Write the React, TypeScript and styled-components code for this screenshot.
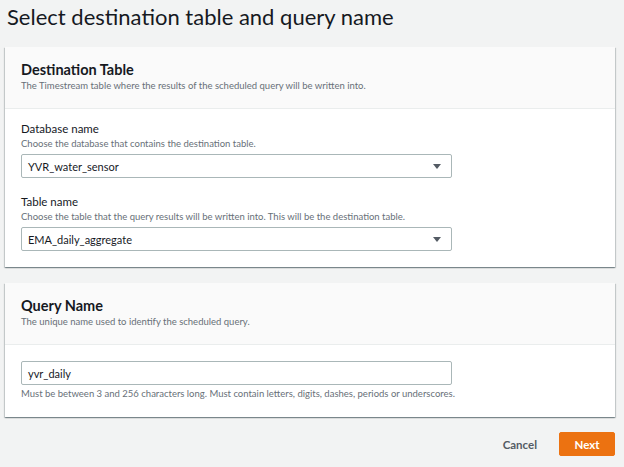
import React from 'react';
import styled, { createGlobalStyle } from 'styled-components';

const GlobalStyle = createGlobalStyle`
  html, body {
    margin: 0;
    padding: 0;
    background: #f2f3f3;
  }
  body {
    font-family: Lato, 'Open Sans', sans-serif;
    color: #16191f;
  }
  * { box-sizing: border-box; }
`;

const Page = styled.div`
  width: 624px;
  height: 467px;
  padding: 0 9px 0 5px;
  display: flex;
  flex-direction: column;
`;

const Title = styled.h1`
  margin: 0;
  padding: 2px 0 0 2px;
  height: 47px;
  font-size: 22px;
  line-height: 30px;
  font-weight: 400;
  color: #16191f;
`;

const Card = styled.section`
  background: #fff;
  box-shadow: 0 1px 1px 0 rgba(0, 28, 36, 0.3), 1px 1px 1px 0 rgba(0, 28, 36, 0.15),
    -1px 1px 1px 0 rgba(0, 28, 36, 0.15);
  & + & {
    margin-top: 16px;
  }
`;

const CardHeader = styled.header`
  background: #fafafa;
  border-bottom: 1px solid #eaeded;
  padding: 14px 16px 15px;
`;

const Heading = styled.h2`
  margin: 0;
  font-size: 14.5px;
  line-height: 18px;
  font-weight: 700;
`;

const Description = styled.p`
  margin: 0;
  font-size: 9.5px;
  line-height: 14px;
  color: #687078;
`;

const CardBody = styled.div<{ $top?: number }>`
  padding: ${(p) => p.$top ?? 12}px 16px 16px;
  display: flex;
  flex-direction: column;
`;

const Field = styled.div`
  display: flex;
  flex-direction: column;
  & + & {
    margin-top: 16px;
  }
`;

const Label = styled.label`
  font-size: 11.5px;
  line-height: 16px;
  color: #16191f;
`;

const Control = styled.div<{ $flush?: boolean }>`
  position: relative;
  width: 431px;
  height: 24px;
  margin-top: ${(p) => (p.$flush ? 0 : 3)}px;
  border: 1px solid #aab7b8;
  border-radius: 2px;
  background: #fff;
  display: flex;
  align-items: center;
  padding: 0 6px;
  font-size: 11px;
  color: #16191f;
`;

const Arrow = styled.span`
  position: absolute;
  right: 10px;
  top: 9px;
  width: 0;
  height: 0;
  border-left: 4px solid transparent;
  border-right: 4px solid transparent;
  border-top: 5px solid #545b64;
`;

const Hint = styled.p`
  margin: 2px 0 0;
  font-size: 9.5px;
  line-height: 14px;
  color: #687078;
`;

const Actions = styled.div`
  margin-top: 15px;
  display: flex;
  justify-content: flex-end;
  align-items: center;
  gap: 22px;
`;

const TextButton = styled.button`
  border: none;
  background: none;
  padding: 0;
  font-family: inherit;
  font-size: 11.5px;
  font-weight: 700;
  color: #545b64;
`;

const PrimaryButton = styled.button`
  width: 56px;
  height: 24px;
  border: 1px solid #ec7211;
  border-radius: 2px;
  background: #ec7211;
  color: #fff;
  font-family: inherit;
  font-size: 11.5px;
  font-weight: 700;
  padding: 0;
`;

const Select = ({ value }: { value: string }) => (
  <Control>
    {value}
    <Arrow />
  </Control>
);

export default function App() {
  return (
    <Page>
      <GlobalStyle />
      <Title>Select destination table and query name</Title>

      <Card>
        <CardHeader>
          <Heading>Destination Table</Heading>
          <Description>
            The Timestream table where the results of the scheduled query will be written into.
          </Description>
        </CardHeader>
        <CardBody>
          <Field>
            <Label>Database name</Label>
            <Description>Choose the database that contains the destination table.</Description>
            <Select value="YVR_water_sensor" />
          </Field>
          <Field>
            <Label>Table name</Label>
            <Description>
              Choose the table that the query results will be written into. This will be the
              destination table.
            </Description>
            <Select value="EMA_daily_aggregate" />
          </Field>
        </CardBody>
      </Card>

      <Card>
        <CardHeader>
          <Heading>Query Name</Heading>
          <Description>The unique name used to identify the scheduled query.</Description>
        </CardHeader>
        <CardBody $top={16}>
          <Control $flush>yvr_daily</Control>
          <Hint>
            Must be between 3 and 256 characters long. Must contain letters, digits, dashes,
            periods or underscores.
          </Hint>
        </CardBody>
      </Card>

      <Actions>
        <TextButton>Cancel</TextButton>
        <PrimaryButton>Next</PrimaryButton>
      </Actions>
    </Page>
  );
}
